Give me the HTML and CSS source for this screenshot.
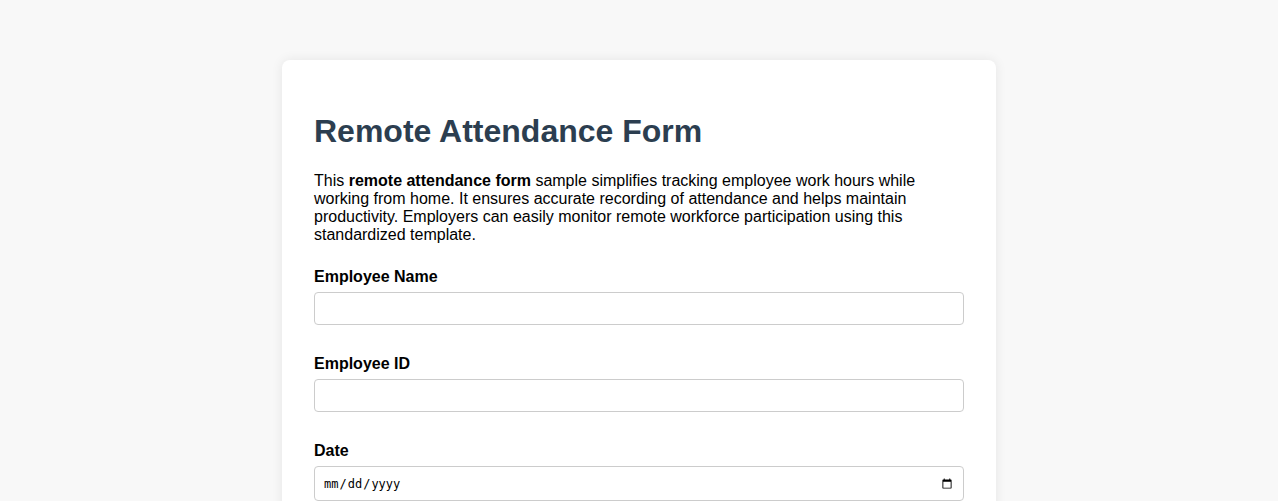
FILE: index.html
```html
<!DOCTYPE html>
<html lang="en">
<head>
<meta charset="utf-8">
<title>Remote Attendance Form</title>
<link rel="stylesheet" href="styles.css">
</head>
<body>
<main class="card">
  <h1 class="title">Remote Attendance Form</h1>
  <p class="intro">This <strong>remote attendance form</strong> sample simplifies tracking employee work hours while working from home. It ensures accurate recording of attendance and helps maintain productivity. Employers can easily monitor remote workforce participation using this standardized template.</p>
  <form class="form">
    <div class="field">
      <label class="label" for="name">Employee Name</label>
      <input class="input" id="name" type="text">
    </div>
    <div class="field">
      <label class="label" for="eid">Employee ID</label>
      <input class="input" id="eid" type="text">
    </div>
    <div class="field">
      <label class="label" for="date">Date</label>
      <input class="input input-date" id="date" type="date">
    </div>
  </form>
</main>
</body>
</html>
```
FILE: styles.css
```css
html, body {
  margin: 0;
  padding: 0;
  background: #f8f8f8;
  font-family: "Liberation Sans", Arial, sans-serif;
  color: #000;
}
body {
  padding-top: 60px;
}
.card {
  display: block;
  width: 650px;
  margin: 0 auto;
  padding: 32px;
  background: #fff;
  border-radius: 8px;
  box-shadow: 0 0 12px rgba(0, 0, 0, 0.08);
}
.title {
  font-size: 32px;
  font-weight: bold;
  color: #2c3e50;
  margin: 21px 0 22px;
  line-height: 37px;
}
.intro {
  font-size: 16px;
  line-height: 18px;
  margin: 0 0 24px;
}
.form {
  display: flex;
  flex-direction: column;
  gap: 30px;
}
.field {
  display: flex;
  flex-direction: column;
}
.label {
  font-weight: bold;
  font-size: 16px;
  line-height: 18px;
  margin-bottom: 6px;
}
.input {
  box-sizing: border-box;
  width: 100%;
  height: 33px;
  padding: 8px;
  border: 1px solid #ccc;
  border-radius: 4px;
  font-size: 13.33px;
  background: #fff;
  margin: 0;
}
.input-date {
  height: 35px;
  font-size: 12px;
}
```
